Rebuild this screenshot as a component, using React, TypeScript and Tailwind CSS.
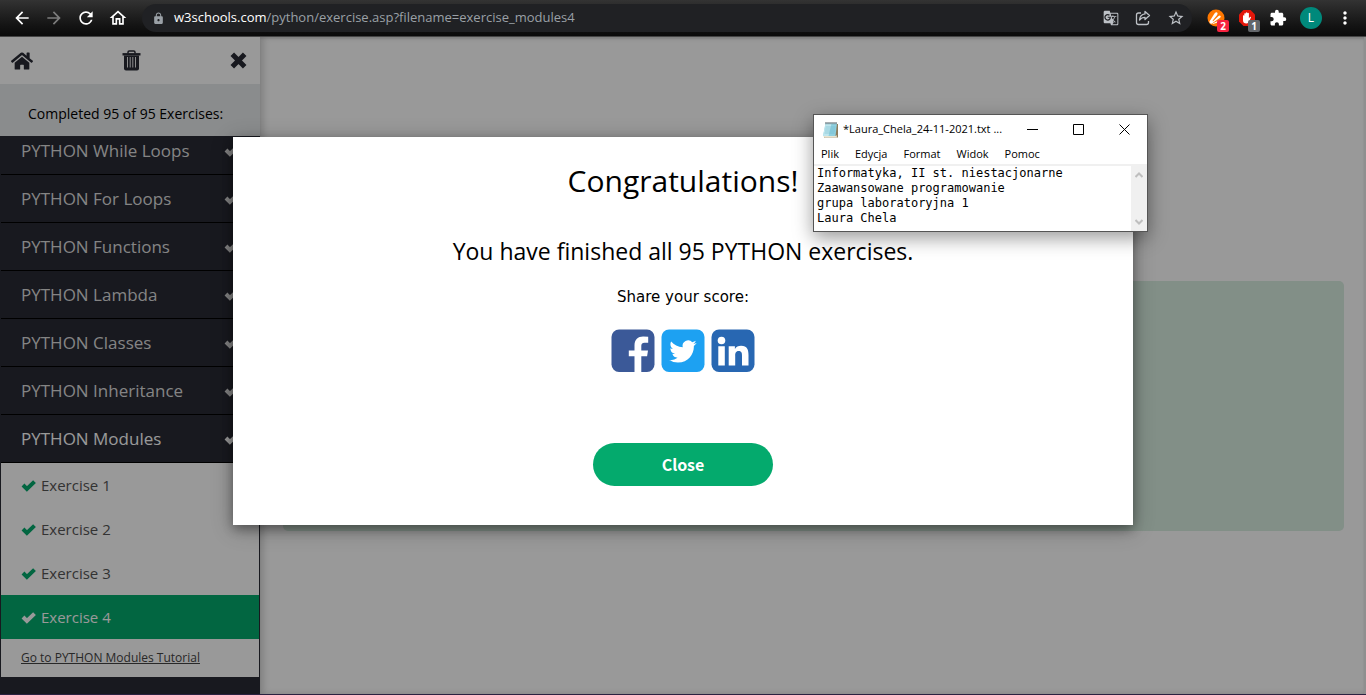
import type { ReactNode } from "react";
import { FaHome } from "react-icons/fa";
import {
  MdArrowBack,
  MdArrowForward,
  MdRefresh,
  MdOutlineHome,
  MdLock,
  MdGTranslate,
  MdStarBorder,
  MdExtension,
  MdMoreVert,
} from "react-icons/md";

const chapters = ["While Loops", "For Loops", "Functions", "Lambda", "Classes", "Inheritance", "Modules"];
const currentChapter = "Modules";
const exercises = [1, 2, 3, 4];
const currentExercise = 4;
const notes = "Informatyka, II st. niestacjonarne\nZaawansowane programowanie\ngrupa laboratoryjna 1\nLaura Chela";
const windowControls = [
  { label: "Minimize", path: "M0 5.5H11" },
  { label: "Maximize", path: "M.5.5H10.5V10.5H.5Z" },
  { label: "Close window", path: "M.5.5 10.5 10.5M10.5.5.5 10.5" },
];

function CheckIcon({ className = "" }: { className?: string }) {
  return (
    <svg viewBox="0 0 15 15" className={`h-[15px] w-[15px] shrink-0 ${className}`} fill="none" stroke="currentColor" strokeWidth="4">
      <path d="M2 7 5.900 10.900 13.500 3.600" />
    </svg>
  );
}

function CrossIcon() {
  return (
    <svg viewBox="0 0 17 17" className="h-[17px] w-[17px]" fill="none" stroke="currentColor" strokeWidth="5">
      <path d="M2.300 2.300 14.700 14.700M14.700 2.300 2.300 14.700" />
    </svg>
  );
}

function ShareIcon() {
  return (
    <svg viewBox="0 0 16 16" className="h-4 w-4" fill="none" stroke="currentColor" strokeWidth="1.3" strokeLinejoin="round">
      <path d="M6 3H3.5Q1.5 3 1.5 5v7.5q0 2 2 2h8q2 0 2-2V11" />
      <path d="M10 1.5 14.5 5.5 10 9.5V7.3Q6.500 7.300 4.500 10 5 4.500 10 3.900Z" />
    </svg>
  );
}

function AvastIcon() {
  return (
    <svg viewBox="0 0 18 18" className="h-[18px] w-[18px]">
      <circle cx="9" cy="9" r="8.5" fill="#ff7800" />
      <g fill="#fff">
        <path d="M2.500 12.500 7.500 4.500q1.500-1.800 2.600-1 1 .9 0 2.400L4.500 13z" />
        <path d="M4.800 13.500 11.500 7q1.400-1 2.100 0 .6 1-.8 1.900L5.500 14z" />
        <path d="M5.500 14.500 12.500 11q1.400-.4 1.700.5.200.9-1.200 1.300L6 15z" />
        <circle cx="4.300" cy="13" r="1.800" />
      </g>
    </svg>
  );
}

function BlockerIcon() {
  return (
    <svg viewBox="0 0 18 18" className="h-[18px] w-[18px]">
      <path d="M5.500 1h7L17 5.500v7L12.500 17h-7L1 12.500v-7z" fill="#e3170a" />
      <path
        d="M5 6.500q.9-.6 1.300.3V4.600q.8-.9 1.500 0V3.700q.8-.9 1.600 0v.5q.8-.8 1.500.1v4.900l1-1.300q.9-.5 1.200.4l-2 4.500Q10.300 14.500 8.500 14.500 5 14.500 5 11.200z"
        fill="#fff"
      />
    </svg>
  );
}

function TrashIcon() {
  return (
    <svg viewBox="0 0 19 21" className="h-[21px] w-[19px]" fill="none" stroke="currentColor">
      <path d="M6 3.500V2.200Q6 1 7.200 1h4.600q1.200 0 1.200 1.200v1.300" strokeWidth="1.500" />
      <path d="M.5 4.300h18" strokeWidth="2.400" />
      <path d="M2 5.500h15V18.500Q17 20.500 15 20.500H4Q2 20.500 2 18.500z" fill="currentColor" stroke="none" />
      <path d="M5.500 7v10.500M8.200 7v10.500M10.800 7v10.500M13.500 7v10.500" stroke="#fff" strokeWidth=".9" />
    </svg>
  );
}

function NotepadIcon() {
  return (
    <svg viewBox="0 0 17 18" className="h-[18px] w-[17px]">
      <path d="M4 3h12v13.500H2z" fill="#8c7b5a" />
      <path d="M3.500 2.500h11.500l-1.500 12.500H1z" fill="#8fd0df" />
      <path d="M3.500 2.500h6L6.500 15H1z" fill="#bfe6ee" />
      <path d="M1 15h12.500l1-1 .5 2.500H3z" fill="#e9e4d0" />
      <path d="M3.500 6h10M3.200 8h10M3 10h10M2.500 12h10" stroke="#6bb3c6" strokeWidth=".5" />
      <path d="M4 1v2.200M6 1v2.200M8 1v2.200M10 1v2.200M12 1v2.200M14 1v2.200" stroke="#3d4a50" strokeWidth=".9" />
    </svg>
  );
}

function FacebookIcon() {
  return (
    <svg viewBox="0 0 44 44" className="h-11 w-11">
      <rect x=".5" y=".5" width="43" height="42.500" rx="7.500" fill="#3b5998" />
      <path d="M23.500 43V27.300h-5.700v-5.900h5.700v-5.200c0-5.700 3.500-8.800 8.600-8.800q2.900 0 5.100.3v6h-3.500c-2.800 0-3.400 1.300-3.400 3.300v4.400h6.700l-.9 5.900h-5.800V43z" fill="#fff" />
    </svg>
  );
}

function TwitterIcon() {
  return (
    <svg viewBox="0 0 44 44" className="h-11 w-11">
      <rect x=".5" y=".5" width="43" height="42.500" rx="7.500" fill="#1da1f2" />
      <path
        transform="translate(8.300 8.800) scale(1.140)"
        d="M23.953 4.570a10 10 0 01-2.825.775 4.958 4.958 0 002.163-2.723c-.951.555-2.005.959-3.127 1.184a4.920 4.920 0 00-8.384 4.482C7.690 8.095 4.067 6.130 1.640 3.162a4.822 4.822 0 00-.666 2.475c0 1.710.870 3.213 2.188 4.096a4.904 4.904 0 01-2.228-.616v.060a4.923 4.923 0 003.946 4.827 4.996 4.996 0 01-2.212.085 4.936 4.936 0 004.604 3.417 9.867 9.867 0 01-6.102 2.105c-.390 0-.779-.023-1.170-.067a13.995 13.995 0 007.557 2.209c9.053 0 13.998-7.496 13.998-13.985 0-.210 0-.420-.015-.630A9.935 9.935 0 0024 4.590z"
        fill="#fff"
      />
    </svg>
  );
}

function LinkedInIcon() {
  return (
    <svg viewBox="0 0 44 44" className="h-11 w-11">
      <rect x=".5" y=".5" width="43" height="42.500" rx="7.500" fill="#2867b2" />
      <circle cx="10.500" cy="11.500" r="3.800" fill="#fff" />
      <path d="M7.300 17.200h6.500V36.500H7.300zM17.700 17.200h6.200v2.700q1.900-3.200 6.200-3.200c6.200 0 7.400 4.100 7.400 9.400v10.400H31V27c0-2.500-.2-4.900-3.300-4.900s-3.500 2.400-3.500 4.700v9.700h-6.500z" fill="#fff" />
    </svg>
  );
}

function BadgedButton({ label, count, badge, children }: { label: string; count: number; badge: string; children: ReactNode }) {
  return (
    <button aria-label={label} className="relative">
      {children}
      <span className={`absolute top-[11px] left-2.5 h-3 w-3 rounded-xs text-center text-[10px] leading-3 font-bold ${badge}`}>
        {count}
      </span>
    </button>
  );
}

function BrowserBar() {
  return (
    <header className="flex h-[37px] shrink-0 items-center border-b border-[#444444] bg-linear-to-b from-[#333333] from-0% via-[#141414] via-70% to-[#0a0a0a] to-100% text-white">
      <nav className="flex w-[142px] shrink-0 items-center gap-3 pl-3">
        <button aria-label="Back"><MdArrowBack size={20} /></button>
        <button aria-label="Forward" className="text-[#7c7c7c]"><MdArrowForward size={20} /></button>
        <button aria-label="Reload"><MdRefresh size={20} /></button>
        <button aria-label="Home"><MdOutlineHome size={20} /></button>
      </nav>
      <div className="flex h-7 flex-1 items-center rounded-full bg-[#202124] pr-[7px] pl-2.5">
        <MdLock size={13} className="text-[#9aa0a6]" />
        <p className="ml-[9px] flex-1 text-[13px] text-[#9aa0a6]">
          <span className="text-white">w3schools.com</span>/python/exercise.asp?filename=exercise_modules4
        </p>
        <div className="flex items-center gap-4 text-[#bdc1c6]">
          <button aria-label="Translate"><MdGTranslate size={16} /></button>
          <button aria-label="Share"><ShareIcon /></button>
          <button aria-label="Bookmark"><MdStarBorder size={18} /></button>
        </div>
      </div>
      <div className="flex w-[174px] shrink-0 items-center justify-between pr-[11px] pl-[15px]">
        <BadgedButton label="Avast" count={2} badge="bg-[#f6223f] text-white"><AvastIcon /></BadgedButton>
        <BadgedButton label="Ad blocker" count={1} badge="bg-[#63666a] text-white"><BlockerIcon /></BadgedButton>
        <button aria-label="Extensions"><MdExtension size={18} /></button>
        <button aria-label="Profile" className="h-[22px] w-[22px] rounded-full bg-[#00897b] text-xs">L</button>
        <button aria-label="Menu"><MdMoreVert size={20} /></button>
      </div>
    </header>
  );
}

function Sidebar() {
  return (
    <aside className="flex w-[260px] shrink-0 flex-col overflow-hidden bg-[#282a35] text-[#282a35]">
      <div className="flex h-[47px] shrink-0 items-center justify-between bg-white pr-[13px] pl-[11px]">
        <a href="#home" aria-label="Home"><FaHome size={22} /></a>
        <button aria-label="Reset progress"><TrashIcon /></button>
        <button aria-label="Close menu"><CrossIcon /></button>
      </div>
      <p className="shrink-0 bg-[#e7e9eb] px-7 pt-5 pb-3 text-sm text-black">Completed 95 of 95 Exercises:</p>
      <div className="min-h-0 flex-1 overflow-hidden px-px">
        <ul className="-mt-[9px]">
          {chapters.map((name) => (
            <li key={name}>
              <a
                href={`#${name}`}
                className={`flex h-12 items-center justify-between border-b border-black px-5 text-[17px] ${name === currentChapter ? "text-white" : "text-[#dddddd]"}`}
              >
                PYTHON {name}
                <CheckIcon />
              </a>
            </li>
          ))}
        </ul>
        <ul className="bg-white">
          {exercises.map((n) => (
            <li key={n}>
              <a
                href={`#exercise-${n}`}
                className={`flex h-11 items-center gap-[5px] px-5 text-[15px] ${n === currentExercise ? "bg-[#04aa6d] text-white" : "text-[#555555]"}`}
              >
                <CheckIcon className={n === currentExercise ? "text-white" : "text-[#04aa6d]"} />
                Exercise {n}
              </a>
            </li>
          ))}
          <li>
            <a href="#tutorial" className="flex h-[38px] items-center px-5 text-xs text-[#444444] underline">
              Go to PYTHON Modules Tutorial
            </a>
          </li>
        </ul>
      </div>
    </aside>
  );
}

function CongratulationsDialog() {
  return (
    <div className="absolute inset-0 flex items-start justify-center bg-black/40 pt-[100px]">
      <section
        role="dialog"
        aria-labelledby="dialog-title"
        className="flex w-[900px] flex-col items-center bg-white pt-5 pb-[39px] text-center text-black shadow-[0_4px_10px_rgba(0,0,0,0.3),0_4px_20px_rgba(0,0,0,0.3)]"
      >
        <h2 id="dialog-title" className="text-[30px] leading-[48px]">Congratulations!</h2>
        <h3 className="mt-7 text-[23px] leading-9">You have finished all 95 PYTHON exercises.</h3>
        <p className="mt-4 font-['DejaVu_Sans',sans-serif] text-[15px] leading-6">Share your score:</p>
        <div className="mt-5 flex gap-1.5">
          <a href="#facebook" aria-label="Facebook"><FacebookIcon /></a>
          <a href="#twitter" aria-label="Twitter"><TwitterIcon /></a>
          <a href="#linkedin" aria-label="LinkedIn"><LinkedInIcon /></a>
        </div>
        <button className="mt-[70px] h-[43px] w-[180px] rounded-full bg-[#04aa6d] pb-0.5 font-['Noto_Sans_CJK_SC',sans-serif] text-base font-bold text-white">
          Close
        </button>
      </section>
    </div>
  );
}

function NotepadWindow() {
  return (
    <section className="absolute top-[114px] right-[218px] flex w-[335px] flex-col border border-[#555555] bg-white text-black shadow-[0_6px_18px_rgba(0,0,0,0.4)]">
      <div className="flex h-[29px] items-center pl-2">
        <NotepadIcon />
        <span className="ml-1 flex-1 text-[11px] whitespace-nowrap">*Laura_Chela_24-11-2021.txt ...</span>
        <div className="flex items-center gap-[35px] pr-[17px]">
          {windowControls.map(({ label, path }) => (
            <button key={label} aria-label={label}>
              <svg viewBox="0 0 11 11" className="block h-[11px] w-[11px]" fill="none" stroke="#000" strokeWidth="1">
                <path d={path} />
              </svg>
            </button>
          ))}
        </div>
      </div>
      <nav className="flex h-[22px] items-center gap-4 border-b-2 border-[#f0f0f0] pl-[7px] text-[11px]">
        {["Plik", "Edycja", "Format", "Widok", "Pomoc"].map((item) => (
          <button key={item}>{item}</button>
        ))}
      </nav>
      <div className="flex h-[65px]">
        <textarea
          aria-label="Document text"
          defaultValue={notes}
          className="block flex-1 resize-none overflow-hidden bg-white pl-[3px] font-['DejaVu_Sans_Mono',monospace] text-xs leading-[15px] outline-none"
        />
        <div className="flex w-4 flex-col items-center justify-between bg-[#f0f0f0] py-1.5">
          <svg viewBox="0 0 8 6" className="h-1.5 w-2" fill="none" stroke="#bfbfbf" strokeWidth="2"><path d="M.5 5 4 1.500 7.500 5" /></svg>
          <svg viewBox="0 0 8 6" className="h-1.5 w-2" fill="none" stroke="#bfbfbf" strokeWidth="2"><path d="M.5 1 4 4.500 7.500 1" /></svg>
        </div>
      </div>
    </section>
  );
}

export default function App() {
  return (
    <div className="relative flex h-screen flex-col overflow-hidden bg-white font-['Open_Sans',sans-serif]">
      <BrowserBar />
      <div className="relative flex min-h-0 flex-1 border-b border-[#2a2140]">
        <Sidebar />
        <main className="flex-1 border-r-2 border-[#eeeeee] px-5 pt-[244px] pl-[23px] shadow-[inset_4px_0_6px_rgba(0,0,0,0.15),inset_0_2px_2px_rgba(0,0,0,0.1)]">
          <div className="h-[250px] rounded-[5px] bg-[#d9eee1]" />
        </main>
        <CongratulationsDialog />
      </div>
      <NotepadWindow />
    </div>
  );
}
